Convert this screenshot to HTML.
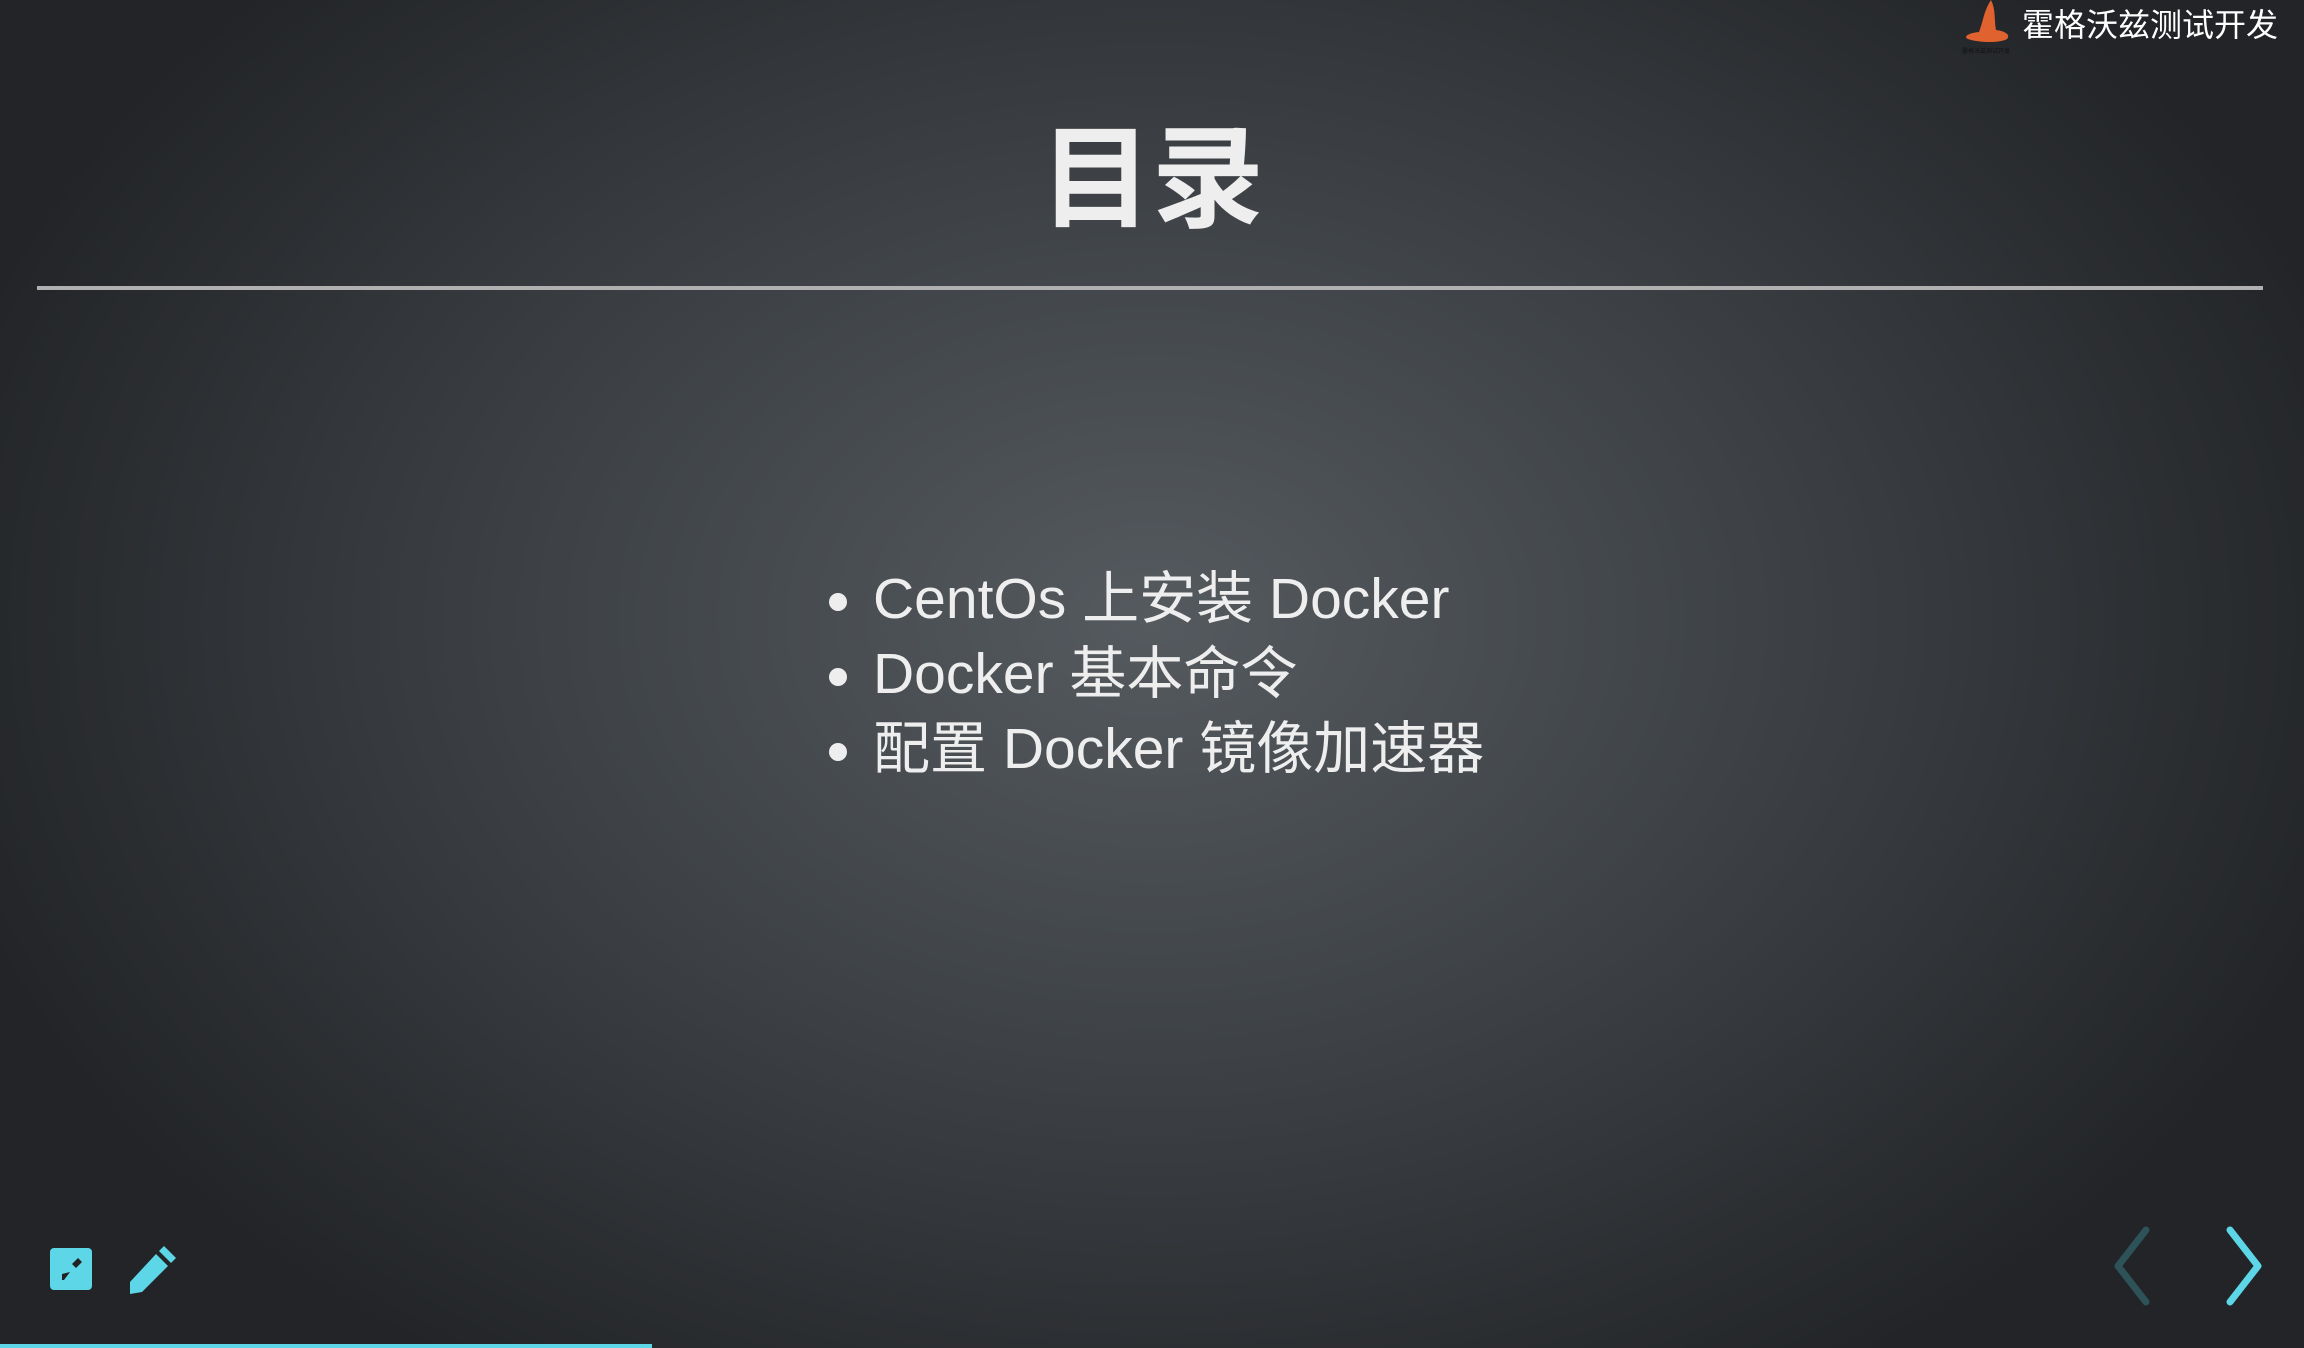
<!DOCTYPE html>
<html><head><meta charset="utf-8"><style>
html,body{margin:0;padding:0;width:2304px;height:1348px;overflow:hidden}
body{background:radial-gradient(ellipse 1250px 900px at 1152px 620px,#555a5f 0%,#3d4145 50%,#222427 100%);font-family:"Liberation Sans","Noto Sans CJK SC",sans-serif;color:#eee;position:relative}
.title{position:absolute;left:0;width:2304px;top:110px;text-align:center;font-size:112px;font-weight:bold;line-height:140px;color:#eee;font-family:"Liberation Sans","Noto Sans CJK SC",sans-serif}
.hr{position:absolute;left:37px;width:2226px;top:286px;height:4px;background:#b0b0b0}
ul{position:absolute;left:873px;top:562px;margin:0;padding:0;list-style:none;font-size:57px;line-height:75px}
li{position:relative;white-space:nowrap}
li:before{content:"";position:absolute;left:-44px;top:31px;width:18px;height:18px;border-radius:50%;background:#eee}
.logo{position:absolute;left:2022px;top:4px;font-size:32px;line-height:42px;color:#fff}
.bar{position:absolute;left:0;bottom:0;width:652px;height:4px;background:#5dd6e8}
</style></head><body>
<svg style="position:absolute;left:1960px;top:0" width="56" height="56" viewBox="0 0 56 56">
<path d="M31 0 C36 10 34 20 36 30 C45 31 51 35 47 39 C40 43 20 43 8 39 C3 37 8 33 19 32 C23 22 24 10 31 0 Z" fill="#e0622f"/>
<text x="2" y="53" font-size="6" fill="#111">霍格沃兹测试开发</text>
</svg>
<div class="logo">霍格沃兹测试开发</div>
<div class="title">目录</div>
<div class="hr"></div>
<ul>
<li>CentOs 上安装 Docker</li>
<li>Docker 基本命令</li>
<li>配置 Docker 镜像加速器</li>
</ul>
<svg style="position:absolute;left:50px;top:1248px" width="42" height="42" viewBox="0 0 42 42">
<rect x="0" y="0" width="42" height="42" rx="4" fill="#5dd6e8"/>
<path d="M22 16 L28 10 L32 14 L26 20 Z" fill="#222"/>
<path d="M12 32 L12 26 L20 24 L14 32 Z" fill="#222"/>
</svg>
<svg style="position:absolute;left:128px;top:1244px" width="52" height="52" viewBox="0 0 52 52">
<path d="M36 2 L48 14 L43 19 L31 7 Z" fill="#5dd6e8"/>
<path d="M28 10 L40 22 L14 48 L2 50 L2 38 Z" fill="#5dd6e8"/>
</svg>
<svg style="position:absolute;left:2108px;top:1226px" width="50" height="80" viewBox="0 0 50 80">
<path d="M38 4 L10 40 L38 76" fill="none" stroke="#2d5359" stroke-width="7" stroke-linecap="round" stroke-linejoin="round"/>
</svg>
<svg style="position:absolute;left:2220px;top:1226px" width="50" height="80" viewBox="0 0 50 80">
<path d="M10 4 L38 40 L10 76" fill="none" stroke="#5dd6e8" stroke-width="7" stroke-linecap="round" stroke-linejoin="round"/>
</svg>
<div class="bar"></div>
</body></html>
